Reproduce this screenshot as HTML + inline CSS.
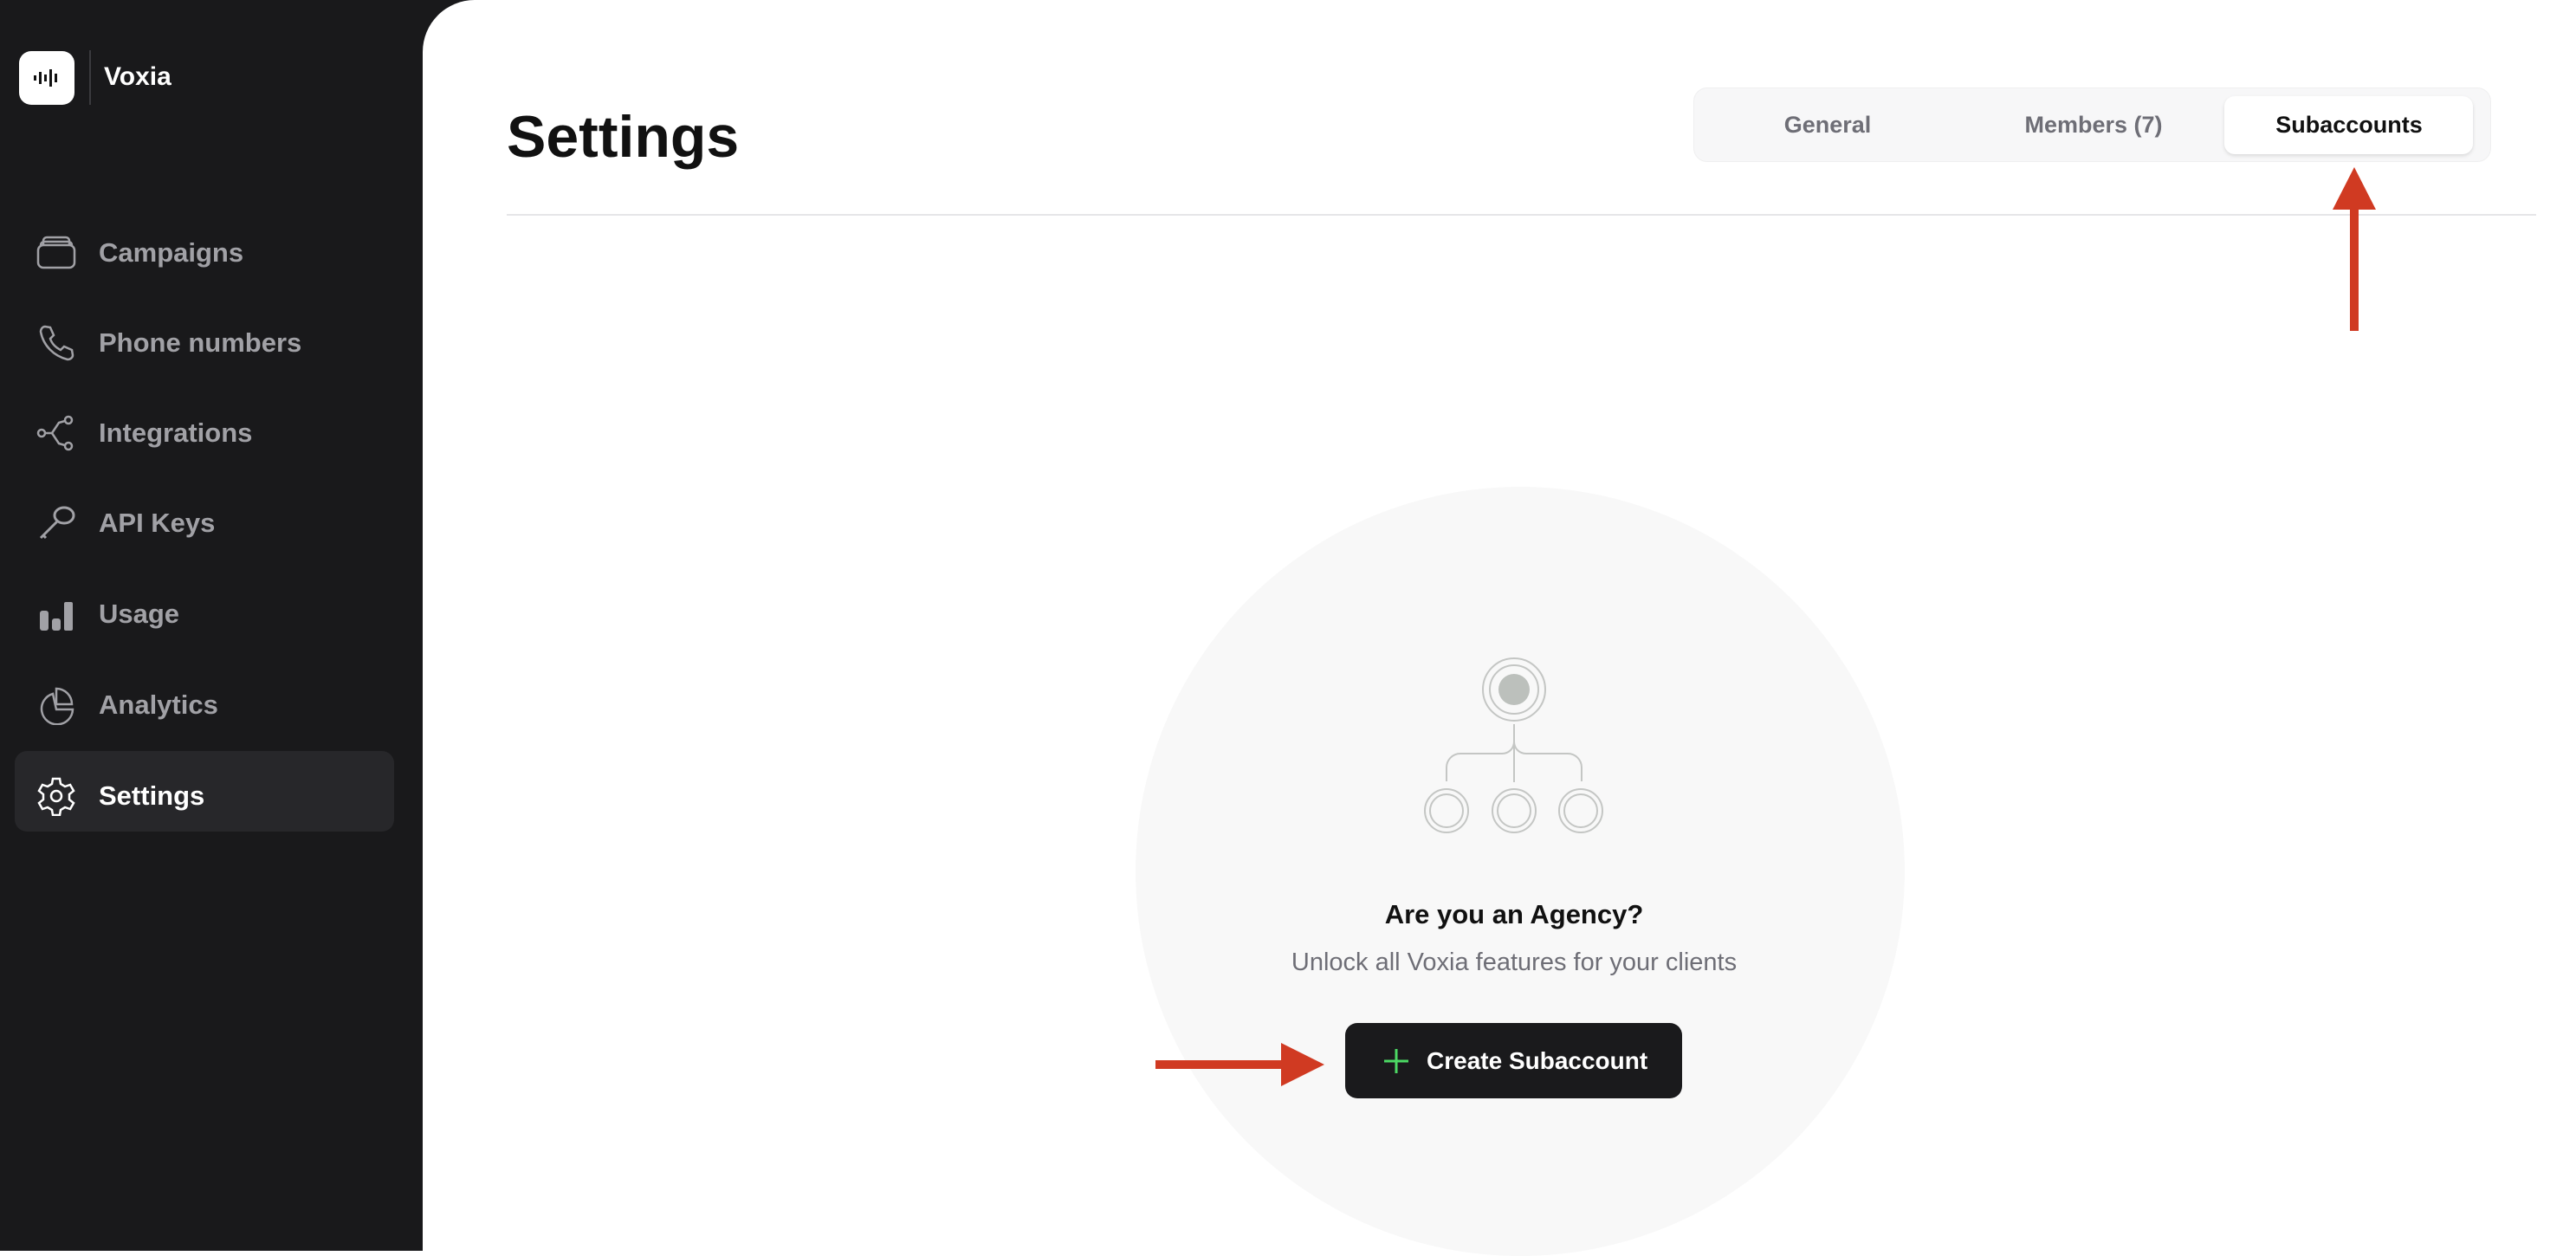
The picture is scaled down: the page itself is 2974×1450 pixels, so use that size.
<!DOCTYPE html>
<html><head><meta charset="utf-8"><style>
*{margin:0;padding:0;box-sizing:border-box}
html{background:#fff}
body{width:2974px;height:1444px;background:#fff;font-family:"Liberation Sans",sans-serif;position:relative;overflow:hidden}
.side{position:absolute;left:0;top:0;width:560px;height:1444px;background:#19191b}
.main{position:absolute;left:488px;top:0;width:2486px;height:1444px;background:#fff;border-top-left-radius:60px}
.logo{position:absolute;left:22px;top:59px;width:64px;height:62px;background:#fff;border-radius:14px}
.div{position:absolute;left:103px;top:58px;width:2px;height:63px;background:#3a3a3e}
.brand{position:absolute;left:120px;top:72px;font-size:30px;font-weight:bold;color:#fff}
.nav{position:absolute;left:114px;font-size:31px;font-weight:bold;color:#a1a1a6;line-height:40px}
.ic{position:absolute;left:42px;width:46px;height:46px}
.sel{position:absolute;left:17px;top:867px;width:438px;height:93px;background:#27272a;border-radius:14px}
.title{position:absolute;left:585px;top:118px;font-size:68px;font-weight:bold;color:#111;line-height:80px}
.hr{position:absolute;left:585px;top:247px;width:2343px;height:2px;background:#e6e6e8}
.tabs{position:absolute;left:1955px;top:101px;width:921px;height:86px;background:#f7f7f8;border:1px solid #efeff0;border-radius:16px}
.tab{position:absolute;top:124px;font-size:27px;font-weight:bold;color:#6e6e76;line-height:40px;transform:translateX(-50%)}
.act{position:absolute;left:2568px;top:111px;width:287px;height:67px;background:#fff;border-radius:12px;box-shadow:0 2px 4px rgba(0,0,0,.12)}
.circle{position:absolute;left:1311px;top:562px;width:888px;height:888px;border-radius:50%;background:#f8f8f8}
.h{position:absolute;left:1748px;transform:translateX(-50%);white-space:nowrap}
.btn{position:absolute;left:1553px;top:1181px;width:389px;height:87px;background:#1a1a1c;border-radius:14px}
</style></head><body>
<div class="side"></div>
<div class="logo"><svg width="64" height="62" viewBox="0 0 64 62"><g fill="#111"><rect x="17" y="28" width="3" height="6"/><rect x="23" y="24" width="3" height="14"/><rect x="29" y="27" width="3" height="8"/><rect x="35" y="21" width="3" height="20"/><rect x="41" y="26" width="3" height="10"/></g></svg></div>
<div class="div"></div>
<div class="brand">Voxia</div>
<div class="sel"></div>
<svg class="ic" style="top:269px" viewBox="0 0 46 46" fill="none" stroke="#a1a1a6" stroke-width="2.5"><rect x="2" y="14" width="42" height="26" rx="6"/><path d="M8 14V9a4 4 0 0 1 4-4h22a4 4 0 0 1 4 4v5M5 14a4 4 0 0 1 4-4h28a4 4 0 0 1 4 4"/></svg>
<div class="nav" style="top:272px">Campaigns</div>
<svg class="ic" style="top:373px" viewBox="0 0 46 46" fill="none" stroke="#a1a1a6" stroke-width="2.5"><path d="M10 4l6 1 4 9-4 4c2 6 6 10 12 13l4-4 9 4 1 6c0 3-3 5-6 5C20 38 8 26 5 10c0-3 2-6 5-6z"/></svg>
<div class="nav" style="top:376px">Phone numbers</div>
<svg class="ic" style="top:477px" viewBox="0 0 46 46" fill="none" stroke="#a1a1a6" stroke-width="2.5"><circle cx="6" cy="23" r="4"/><circle cx="37" cy="8" r="4"/><circle cx="37" cy="38" r="4"/><path d="M10 23h8l8-12 7-2M18 23l8 12 7 2"/></svg>
<div class="nav" style="top:480px">Integrations</div>
<svg class="ic" style="top:581px" viewBox="0 0 46 46" fill="none" stroke="#a1a1a6" stroke-width="3"><ellipse cx="32" cy="14" rx="11" ry="9"/><path d="M24 21L5 40M8 37l3 3"/></svg>
<div class="nav" style="top:584px">API Keys</div>
<svg class="ic" style="top:686px" viewBox="0 0 46 46" fill="#a1a1a6"><rect x="4" y="19" width="10" height="23" rx="3"/><rect x="18" y="28" width="10" height="14" rx="3"/><rect x="32" y="9" width="10" height="33" rx="2"/></svg>
<div class="nav" style="top:689px">Usage</div>
<svg class="ic" style="top:791px" viewBox="0 0 46 46" fill="none" stroke="#a1a1a6" stroke-width="2.5"><path d="M19 10A18 18 0 1 0 42 28H23z"/><path d="M23 4a18 18 0 0 1 18 18H23z"/></svg>
<div class="nav" style="top:794px">Analytics</div>
<svg class="ic" style="top:896px" viewBox="0 0 46 46" fill="none" stroke="#fff" stroke-width="2.5"><path d="M19 3h8l1 6 5 3 6-2 4 7-5 4v6l5 4-4 7-6-2-5 3-1 6h-8l-1-6-5-3-6 2-4-7 5-4v-6l-5-4 4-7 6 2 5-3z"/><circle cx="23" cy="23" r="6"/></svg>
<div class="nav" style="top:899px;color:#fff">Settings</div>
<div class="main"></div>
<div class="title">Settings</div>
<div class="hr"></div>
<div class="tabs"></div>
<div class="act"></div>
<div class="tab" style="left:2110px">General</div>
<div class="tab" style="left:2417px">Members (7)</div>
<div class="tab" style="left:2712px;color:#111">Subaccounts</div>
<svg style="position:absolute;left:2690px;top:190px" width="56" height="195" viewBox="0 0 56 195"><path d="M28 3L53 52H33V192H23V52H3z" fill="#d03a22"/></svg>
<div class="circle"></div>
<svg style="position:absolute;left:1630px;top:750px" width="240" height="220" viewBox="1630 750 240 220" fill="none" stroke="#c4c6c4" stroke-width="2"><circle cx="1748" cy="796" r="36"/><circle cx="1748" cy="796" r="28"/><circle cx="1748" cy="796" r="18" fill="#bcc0bc" stroke="none"/><path d="M1748 836V903M1670 902V886a16 16 0 0 1 16-16h48c8 0 14-6 14-14c0 8 6 14 14 14h48a16 16 0 0 1 16 16v16"/><circle cx="1670" cy="936" r="25"/><circle cx="1670" cy="936" r="19"/><circle cx="1748" cy="936" r="25"/><circle cx="1748" cy="936" r="19"/><circle cx="1825" cy="936" r="25"/><circle cx="1825" cy="936" r="19"/></svg>
<div class="h" style="top:1038px;font-size:31px;font-weight:bold;color:#111">Are you an Agency?</div>
<div class="h" style="top:1095px;font-size:29px;color:#6e6e76">Unlock all Voxia features for your clients</div>
<div class="btn"></div>
<svg style="position:absolute;left:1596px;top:1209px" width="32" height="32" viewBox="0 0 32 32" stroke="#4cd964" stroke-width="3"><path d="M16 2v28M2 16h28"/></svg>
<div style="position:absolute;left:1647px;top:1209px;font-size:28px;font-weight:bold;color:#fff;line-height:32px">Create Subaccount</div>
<svg style="position:absolute;left:1334px;top:1202px" width="198" height="54" viewBox="0 0 198 54"><path d="M0 22H145V2L195 27L145 52V32H0z" fill="#d03a22"/></svg>
</body></html>
